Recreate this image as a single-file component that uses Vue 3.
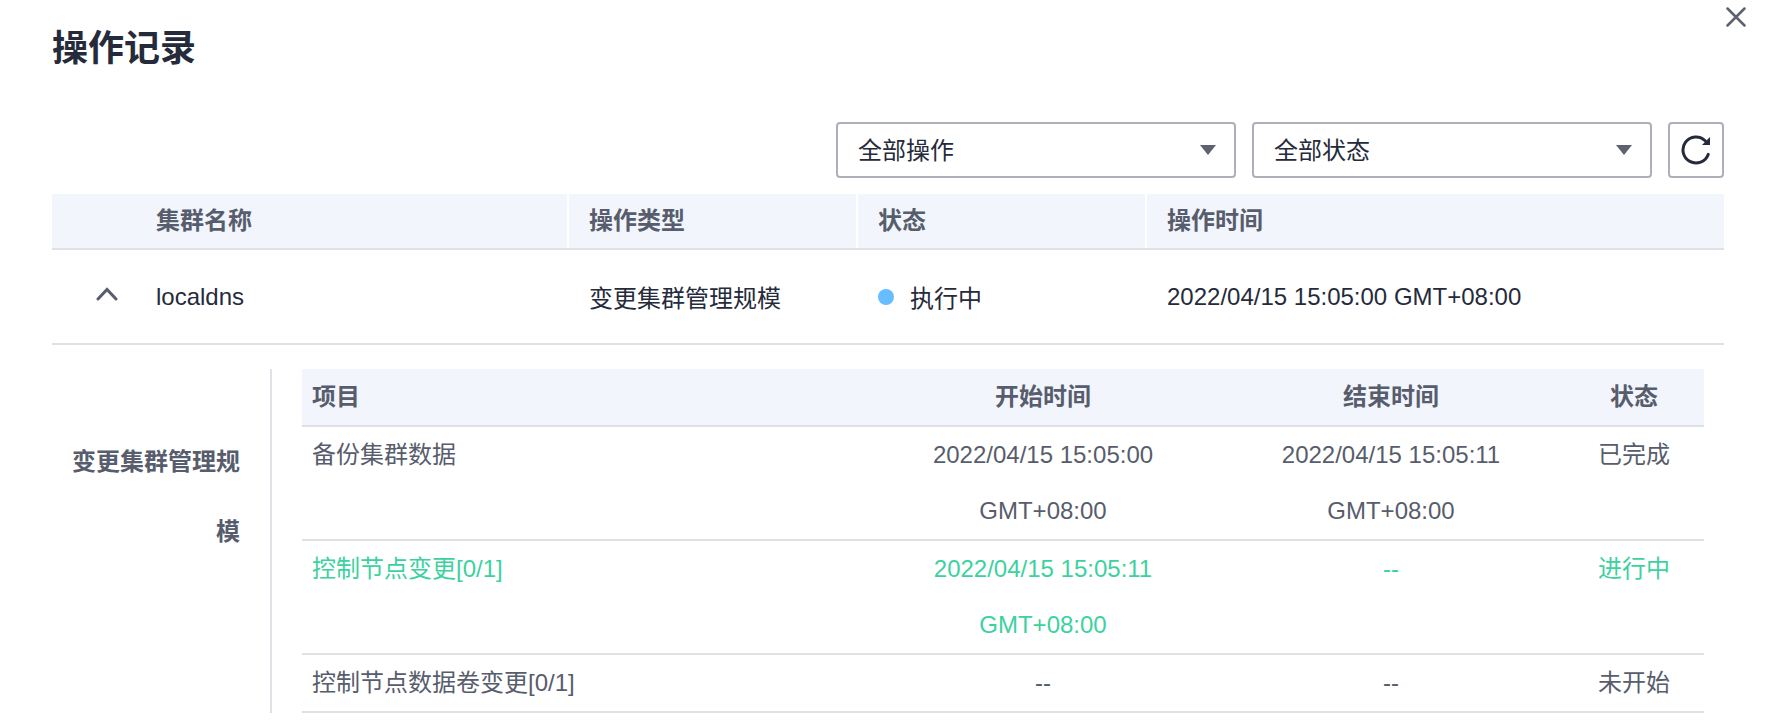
<script setup>
const columns = ['集群名称', '操作类型', '状态', '操作时间']
const subRows = [
  { name: '备份集群数据', start: '2022/04/15 15:05:00 GMT+08:00', end: '2022/04/15 15:05:11 GMT+08:00', status: '已完成', active: false },
  { name: '控制节点变更[0/1]', start: '2022/04/15 15:05:11 GMT+08:00', end: '--', status: '进行中', active: true },
  { name: '控制节点数据卷变更[0/1]', start: '--', end: '--', status: '未开始', active: false }
]
</script>

<template>
  <div class="dialog">
    <button class="close" aria-label="关闭">
      <svg width="20" height="20" viewBox="0 0 20 20"><path d="M1.5 1.5 L18.5 18.5 M18.5 1.5 L1.5 18.5" fill="none" stroke="#5e6270" stroke-width="2.5" stroke-linecap="round" /></svg>
    </button>
    <h1 class="title">操作记录</h1>
    <div class="toolbar">
      <div class="select"><span>全部操作</span><i class="caret"></i></div>
      <div class="select"><span>全部状态</span><i class="caret"></i></div>
      <div class="refresh">
        <svg width="30" height="30" viewBox="0 0 30 30">
          <path d="M24.2 5.8 A13 13 0 1 0 27.2 19.4" fill="none" stroke="#252b3a" stroke-width="3" stroke-linecap="round" />
          <path d="M29 2 V10 H21 Z" fill="#252b3a" />
        </svg>
      </div>
    </div>
    <div class="main-head">
      <div v-for="c in columns" :key="c" class="main-th">{{ c }}</div>
    </div>
    <div class="main-row">
      <div class="main-td first">
        <svg class="chevron" width="22" height="15" viewBox="0 0 22 15"><path d="M2 13 L11 3.5 L20 13" fill="none" stroke="#575d6c" stroke-width="3" stroke-linecap="round" /></svg>
        <span>localdns</span>
      </div>
      <div class="main-td">变更集群管理规模</div>
      <div class="main-td"><i class="dot"></i>执行中</div>
      <div class="main-td">2022/04/15 15:05:00 GMT+08:00</div>
    </div>
    <div class="detail">
      <div class="detail-label">变更集群管理规模</div>
      <div class="sub">
        <div class="sub-head">
          <div class="left">项目</div>
          <div>开始时间</div>
          <div>结束时间</div>
          <div>状态</div>
        </div>
        <div v-for="r in subRows" :key="r.name" class="sub-row" :class="{ active: r.active }">
          <div class="left">{{ r.name }}</div>
          <div>{{ r.start }}</div>
          <div>{{ r.end }}</div>
          <div>{{ r.status }}</div>
        </div>
      </div>
    </div>
  </div>
</template>

<style>
html, body { margin: 0; background: #fff; overflow: hidden; }
</style>

<style scoped>
.dialog {
  position: relative;
  width: 1776px;
  height: 724px;
  box-sizing: border-box;
  padding: 0 52px;
  font-family: "Liberation Sans", "Noto Sans CJK SC", sans-serif;
  font-size: 24px;
  color: #252b3a;
  overflow: hidden;
}
.close {
  position: absolute;
  left: 1726px;
  top: 7px;
  width: 20px;
  height: 20px;
  padding: 0;
  border: 0;
  background: none;
  line-height: 0;
}
.title {
  margin: 0;
  padding-top: 25px;
  height: 98px;
  box-sizing: border-box;
  font-size: 36px;
  line-height: 48px;
  font-weight: 700;
  color: #252b3a;
}
.toolbar {
  display: flex;
  justify-content: flex-end;
  gap: 16px;
  padding: 24px 0 16px;
  height: 56px;
}
.select {
  width: 400px;
  height: 56px;
  box-sizing: border-box;
  border: 2px solid #adb0b8;
  border-radius: 4px;
  padding: 0 18px 0 20px;
  display: flex;
  align-items: center;
  justify-content: space-between;
}
.select span { margin-bottom: 4px; }
.caret {
  width: 0;
  height: 0;
  border-left: 8px solid transparent;
  border-right: 8px solid transparent;
  border-top: 10px solid #5e6270;
}
.refresh {
  width: 56px;
  height: 56px;
  box-sizing: border-box;
  border: 2px solid #adb0b8;
  border-radius: 4px;
  display: flex;
  align-items: center;
  justify-content: center;
}
.main-head, .main-row {
  display: grid;
  grid-template-columns: 515px 289px 289px 579px;
}
.main-head {
  height: 56px;
  background: #f2f5fc;
  border-bottom: 2px solid #dfe1e6;
  box-sizing: border-box;
}
.main-th {
  height: 54px;
  line-height: 54px;
  padding-left: 20px;
  font-weight: 700;
  color: #575d6c;
  border-left: 2px solid #fff;
  box-sizing: border-box;
}
.main-th:first-child {
  border-left: 0;
  padding-left: 104px;
}
.main-row {
  height: 95px;
  box-sizing: border-box;
  border-bottom: 2px solid #dfe1e6;
}
.main-td {
  display: flex;
  align-items: center;
  padding-left: 22px;
}
.main-td.first {
  padding-left: 0;
  position: relative;
}
.main-td.first span { margin-left: 104px; }
.chevron { position: absolute; left: 44px; top: 36px; }
.dot {
  width: 16px;
  height: 16px;
  border-radius: 50%;
  background: #66bdff;
  margin-right: 16px;
}
.detail {
  display: flex;
  margin-top: 24px;
}
.detail-label {
  width: 220px;
  height: 344px;
  box-sizing: border-box;
  padding: 58px 30px 0 20px;
  border-right: 2px solid #dfe1e6;
  font-weight: 700;
  color: #575d6c;
  text-align: right;
  line-height: 70px;
}
.sub {
  margin-left: 30px;
  width: 1402px;
}
.sub-head, .sub-row {
  display: grid;
  grid-template-columns: 566px 350px 346px 140px;
  text-align: center;
  border-bottom: 2px solid #dfe1e6;
  line-height: 56px;
  color: #575d6c;
}
.sub-head {
  background: #f2f5fc;
  font-weight: 700;
}
.sub-head > div, .sub-row > div { padding: 0 10px; }
.left { text-align: left; }
.sub-row.active { color: #3dd1a0; }
</style>
